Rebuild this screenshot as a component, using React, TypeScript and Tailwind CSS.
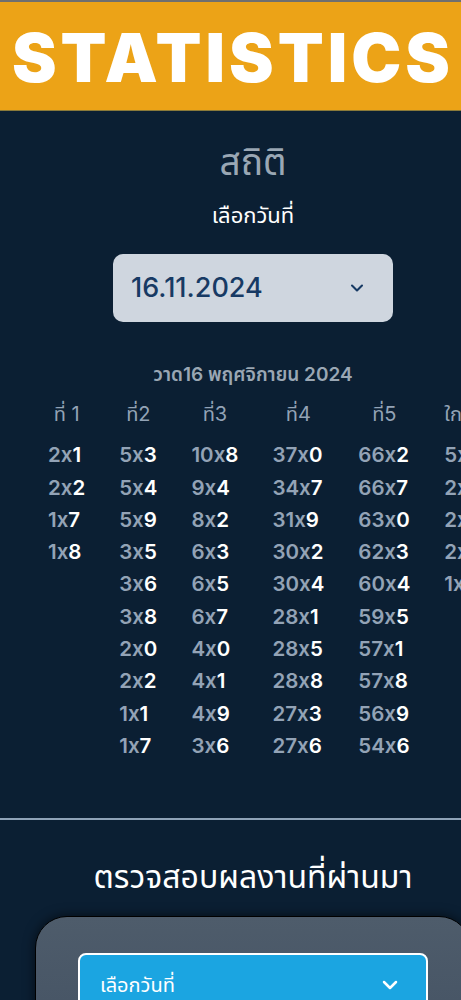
import { ChevronDown } from "lucide-react";

const font = { fontFamily: 'Inter, "Noto Sans", "Noto Sans Thai", sans-serif', fontFeatureSettings: '"calt" 0' };

interface Column {
  title: string;
  values: string[];
}

const columns: Column[] = [
  { title: "ที่ 1", values: ["2x1", "2x2", "1x7", "1x8"] },
  { title: "ที่2", values: ["5x3", "5x4", "5x9", "3x5", "3x6", "3x8", "2x0", "2x2", "1x1", "1x7"] },
  { title: "ที่3", values: ["10x8", "9x4", "8x2", "6x3", "6x5", "6x7", "4x0", "4x1", "4x9", "3x6"] },
  { title: "ที่4", values: ["37x0", "34x7", "31x9", "30x2", "30x4", "28x1", "28x5", "28x8", "27x3", "27x6"] },
  { title: "ที่5", values: ["66x2", "66x7", "63x0", "62x3", "60x4", "59x5", "57x1", "57x8", "56x9", "54x6"] },
  { title: "ใกล้เคียง", values: ["5x3", "2x7", "2x1", "2x5", "1x9"] },
];

function Score({ value }: { value: string }) {
  const head = value.slice(0, -1);
  const last = value.slice(-1);
  return (
    <span>
      <span className="text-[#93a3b6]">{head}</span>
      <span className="text-white">{last}</span>
    </span>
  );
}

export default function App() {
  const rows = Array.from({ length: 10 }, (_, i) => i);

  return (
    <div className="min-h-screen w-[506px] bg-[#0b1f33]" style={font}>
      {/* Banner */}
      <div className="border-t-2 border-b border-t-[#6f6f6f] border-b-[#8a7a3a] bg-[#eca317] h-[111px] flex items-center pl-[12px]">
        <h1 className="text-white font-black text-[67px] leading-none tracking-[4px] mt-[2px]">STATISTICS</h1>
      </div>

      {/* Stats */}
      <div className="flex flex-col items-center pt-[27px]">
        <h2 className="text-[#9aa7b4] text-[37px] leading-[48px]">สถิติ</h2>
        <p className="text-white text-[22px] mt-[13px]">เลือกวันที่</p>
        <div className="mt-[22px] w-[280px] h-[68px] rounded-[10px] bg-[#cfd6df] flex items-center justify-between pl-[18px] pr-[26px]">
          <span className="text-[#173a64] text-[27px] font-medium">16.11.2024</span>
          <ChevronDown className="w-5 h-5 text-[#173a64]" strokeWidth={2.5} />
        </div>

        <p className="mt-[39px] text-[#9aa7b4] text-[19px] font-semibold">วาด16 พฤศจิกายน 2024</p>

        <table className="mt-[3px] self-start ml-[31px]">
          <thead>
            <tr>
              {columns.map((c) => (
                <th key={c.title} className="px-[17px] pt-[6px] pb-[11px] text-center font-normal text-[20px] text-[#93a3b6] whitespace-nowrap">
                  {c.title}
                </th>
              ))}
            </tr>
          </thead>
          <tbody>
            {rows.map((r) => (
              <tr key={r}>
                {columns.map((c) => (
                  <td key={c.title} className="px-[17px] h-[32.3px] text-left text-[20.5px] font-semibold whitespace-nowrap">
                    {c.values[r] ? <Score value={c.values[r]} /> : null}
                  </td>
                ))}
              </tr>
            ))}
          </tbody>
        </table>
      </div>

      <div className="mt-[56px] h-[2px] bg-[#8fa3b8]" />

      {/* History */}
      <div className="flex flex-col items-center pt-[33px]">
        <h2 className="text-white text-[32px]">ตรวจสอบผลงานที่ผ่านมา</h2>
        <div className="mt-[15px] w-[436px] rounded-[32px] border border-black bg-gradient-to-b from-[#4e5c6b] to-[#445263] shadow-[0_0_12px_rgba(0,0,0,0.6)] px-[42px] pt-[36px] pb-[40px]">
          <div className="h-[64px] rounded-[8px] border-2 border-white bg-[#1ba5e1] flex items-center justify-between pl-[20px] pr-[24px]">
            <span className="text-white text-[20px]">เลือกวันที่</span>
            <ChevronDown className="w-6 h-6 text-white" strokeWidth={2.5} />
          </div>
        </div>
      </div>
    </div>
  );
}
